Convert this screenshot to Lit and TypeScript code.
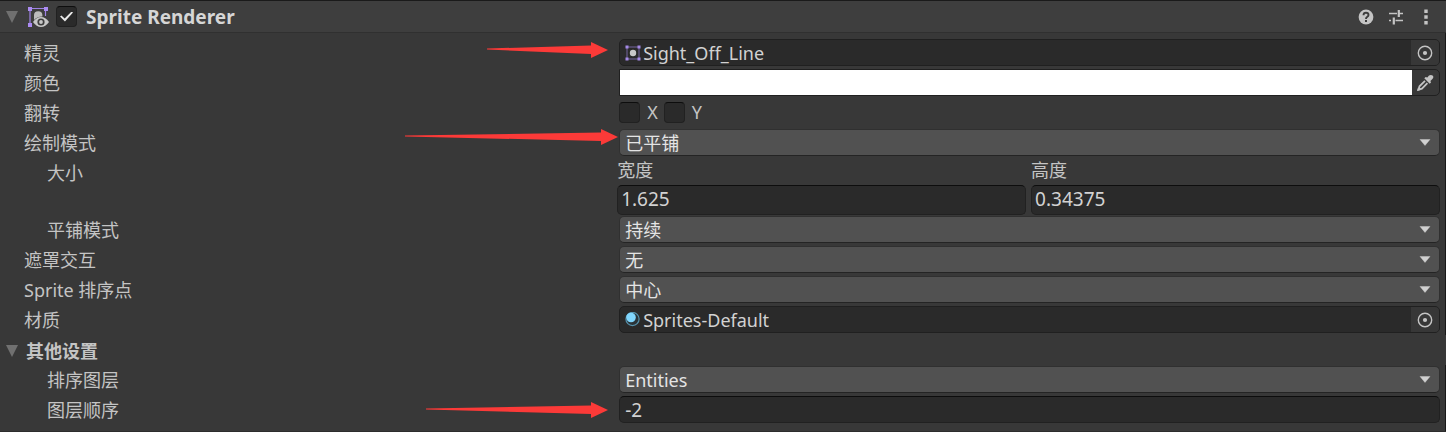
import { LitElement, html, css, svg, nothing } from "lit";
import { customElement, property } from "lit/decorators.js";

const sheet = css`
  * { box-sizing: border-box; }
  :host {
    font-family: "Noto Sans", "Noto Sans CJK SC", sans-serif;
    font-size: 18px;
    line-height: 26px;
    color: #c4c4c4;
  }
  button, input, select { font: inherit; margin: 0; color: inherit; }
  button { background: none; border: 0; padding: 0; }
  svg { display: block; }
`;

const triangle = svg`<svg width="12" height="12" viewBox="0 0 12 12"><path d="M0 0H12L6 12Z" fill="#707070"/></svg>`;

const rendererIcon = svg`<svg width="22" height="22" viewBox="0 0 22 22">
  <path d="M3 18V2.500H18.500V10" fill="none" stroke="#9f83e4" stroke-width="1.200"/>
  <path d="M1 1h4v4h-4zM17 1h4v4h-4zM1 17h4v4h-4z" fill="#ab8bf2"/>
  <path d="M7 12V9a4.200 3.800 0 0 1 8.400 0v1.500Q10 10.500 7 14Z" fill="#bdbdbd"/>
  <path d="M6 16Q9.500 11 14 11T22 16Q18.500 21 14 21T6 16Z" fill="#c8c8c8"/>
  <circle cx="14" cy="16" r="3.600" fill="#3e3e3e"/>
  <circle cx="14" cy="16" r="1.900" fill="#c8c8c8"/>
</svg>`;

const spriteIcon = svg`<svg width="16" height="16" viewBox="0 0 16 16">
  <path d="M2 2H14V14H2Z" fill="none" stroke="#75649f" stroke-width="1"/>
  <path d="M.5.5h3v3h-3zM12.500.5h3v3h-3zM.5 12.500h3v3h-3zM12.500 12.500h3v3h-3z" fill="#a58ae6"/>
  <circle cx="8" cy="8" r="3.200" fill="#c8c8c8"/>
</svg>`;

const materialIcon = svg`<svg width="16" height="16" viewBox="0 0 16 16">
  <circle cx="7.500" cy="7" r="6.600" fill="#2a3338" stroke="#5591ab" stroke-width="1.200"/>
  <circle cx="6" cy="5.500" r="4.800" fill="#80d6fd"/>
</svg>`;

const pickerIcon = svg`<svg width="16" height="16" viewBox="0 0 16 16">
  <circle cx="8" cy="8" r="6.700" fill="none" stroke="#c4c4c4" stroke-width="1.400"/>
  <circle cx="8" cy="8" r="2.100" fill="#c4c4c4"/>
</svg>`;

const dropperIcon = svg`<svg width="18" height="18" viewBox="0 0 18 18">
  <path d="M8.300 4.300 9.700 3 11.300 3.600 13 1.600Q15 .2 16.600 1.600T16.400 5L14.400 6.900 15 8.500 13.700 9.700Z" fill="#c4c4c4"/>
  <path d="M9 6.800 3.500 12.300 2.500 15.700 5.900 14.700 11.400 9.200" fill="none" stroke="#c4c4c4" stroke-width="1.800"/>
  <path d="M1 17 2 13.500 4.500 16Z" fill="#c4c4c4"/>
</svg>`;

const helpIcon = svg`<svg width="16" height="16" viewBox="0 0 16 16">
  <circle cx="8" cy="8" r="7.400" fill="#c4c4c4"/>
  <path d="M5.500 6.200Q5.500 3.800 8 3.800T10.500 6Q10.500 7.200 9.200 7.900 8 8.500 8 9.900" fill="none" stroke="#3c3c3c" stroke-width="1.900"/>
  <path d="M7 11h2v2h-2z" fill="#3c3c3c"/>
</svg>`;

const presetIcon = svg`<svg width="16" height="16" viewBox="0 0 16 16">
  <path d="M1 4.500h8M11 4.500h4M1 11.500h2M7.500 11.500h7.500" stroke="#c4c4c4" stroke-width="1.400"/>
  <path d="M9.700 1h2.200v7h-2.200zM4.700 8.500h2.200v7h-2.200z" fill="#c4c4c4"/>
</svg>`;

const menuIcon = svg`<svg width="6" height="16" viewBox="0 0 6 16">
  <path d="M1.300.5h3.400v3.400h-3.400zM1.300 6.300h3.400v3.400h-3.400zM1.300 12.100h3.400v3.400h-3.400z" fill="#c4c4c4"/>
</svg>`;

@customElement("pointer-arrow")
class PointerArrow extends LitElement {
  @property({ type: Number }) length = 120;
  static styles = css`svg { display: block; }`;
  render() {
    const n = this.length;
    return html`<svg width=${n} height="18" viewBox="0 0 ${n} 18" aria-hidden="true">
      <path fill="#fc3a38" d="M0 7.500 ${n - 17} 4.500V1L${n} 9 ${n - 17} 17V13L0 8.500Z"/>
    </svg>`;
  }
}

@customElement("inspector-row")
class InspectorRow extends LitElement {
  @property() label = "";
  @property({ type: Boolean, reflect: true }) nested = false;
  @property({ type: Boolean, reflect: true }) tall = false;
  @property({ type: Number }) arrow = 0;
  @property({ type: Boolean, reflect: true }) touching = false;
  static styles = [sheet, css`
    :host {
      display: grid;
      grid-template-columns: minmax(0, 3fr) minmax(0, 4fr);
      min-height: 30px;
    }
    .name { padding: 2px 0 2px 24px; white-space: nowrap; }
    :host([nested]) .name { padding-left: 47px; }
    .control { position: relative; padding: 1px 0 2px 2px; }
    :host([tall]) .control { padding: 0; }
    .arrow { position: absolute; right: 100%; top: 3px; margin-right: 9px; }
    :host([touching]) .arrow { top: 0; margin-right: -1px; }
    :host([nested]) .arrow { top: 6px; }
  `];
  render() {
    return html`
      <div class="name">${this.label}</div>
      <div class="control">
        <slot></slot>
        ${this.arrow ? html`<pointer-arrow class="arrow" .length=${this.arrow}></pointer-arrow>` : nothing}
      </div>`;
  }
}

@customElement("select-field")
class SelectField extends LitElement {
  @property() value = "";
  @property() label = "";
  static styles = [sheet, css`
    :host { display: block; }
    .field { display: grid; align-items: center; }
    .field > * { grid-area: 1 / 1; }
    .select {
      appearance: none;
      width: 100%;
      height: 27px;
      line-height: 24px;
      padding: 0 28px 0 5px;
      border: 1px solid #303030;
      border-bottom-color: #242424;
      border-radius: 5px;
      background: #515151;
      color: #e4e4e4;
    }
    .chevron { justify-self: end; margin-right: 9px; pointer-events: none; }
  `];
  render() {
    return html`<div class="field">
      <select class="select" aria-label=${this.label}><option selected>${this.value}</option></select>
      <svg class="chevron" width="12" height="7" viewBox="0 0 12 7"><path d="M1 .5H11L6 6.500Z" fill="#d0d0d0" stroke="#d0d0d0" stroke-width=".4"/></svg>
    </div>`;
  }
}

@customElement("text-field")
class TextField extends LitElement {
  @property() value = "";
  @property() label = "";
  @property() caption = "";
  static styles = [sheet, css`
    :host { display: block; }
    .caption { display: block; line-height: 24px; }
    .input {
      display: block;
      width: 100%;
      height: 27px;
      line-height: 24px;
      padding: 0 5px;
      border: 1px solid #212121;
      border-top-color: #0d0d0d;
      border-radius: 5px;
      background: #2a2a2a;
      color: #d2d2d2;
      font-size: 19px;
    }
    .caption .input { height: 30px; margin-top: 3px; padding: 0 3px 3px; }
  `];
  render() {
    return this.caption
      ? html`<label class="caption">${this.caption}<input class="input" type="text" .value=${this.value}></label>`
      : html`<input class="input" type="text" aria-label=${this.label} .value=${this.value}>`;
  }
}

@customElement("object-field")
class ObjectField extends LitElement {
  @property() value = "";
  @property() label = "";
  @property() kind = "sprite";
  static styles = [sheet, css`
    :host { display: block; }
    .box {
      display: flex;
      align-items: center;
      height: 27px;
      padding-left: 5px;
      border: 1px solid #202020;
      border-radius: 5px;
      background: #2a2a2a;
      overflow: hidden;
    }
    .input {
      flex: 1;
      min-width: 0;
      height: 25px;
      padding: 0 0 0 2px;
      border: 0;
      background: none;
      color: #d2d2d2;
    }
    .pick { display: grid; place-items: center; width: 28px; height: 25px; background: #373737; }
  `];
  render() {
    return html`<div class="box">
      ${this.kind === "sprite" ? spriteIcon : materialIcon}
      <input class="input" type="text" readonly aria-label=${this.label} .value=${this.value}>
      <button class="pick" aria-label="选择${this.label}">${pickerIcon}</button>
    </div>`;
  }
}

@customElement("app-root")
class AppRoot extends LitElement {
  static styles = [sheet, css`
    :host { display: block; min-height: 100vh; background: #383838; border-top: 1px solid #1a1a1a; }
    .header {
      display: flex;
      align-items: center;
      height: 32px;
      padding: 0 17px 0 6px;
      background: #3e3e3e;
      border-bottom: 1px solid #303030;
    }
    .fold { display: flex; }
    .kind { margin-left: 9px; }
    .enable { margin: 0 9px 0 7px; }
    .title { flex: 1; margin: 0; font-size: 19px; font-weight: 700; color: #d6d6d6; }
    .tools { display: flex; align-items: center; gap: 14px; }
    .tool { display: flex; }
    .tool:last-child { margin-left: 5px; }
    .check {
      appearance: none;
      display: grid;
      place-items: center;
      width: 21px;
      height: 21px;
      border: 1px solid #212121;
      border-top-color: #0d0d0d;
      border-radius: 4px;
      background: #2a2a2a;
    }
    .check:checked::after {
      content: "";
      width: 13px;
      height: 10px;
      background: #e8e8e8;
      clip-path: polygon(0 50%, 11% 39%, 36% 69%, 89% 0, 100% 10%, 38% 100%);
    }
    .group { padding: 5px 5px 0 0; border-right: 1px solid #191919; }
    .more { padding-top: 0; padding-bottom: 6px; }
    .color {
      display: flex;
      align-items: center;
      height: 27px;
      border: 1px solid #202020;
      border-radius: 0 5px 5px 0;
    }
    .swatch {
      appearance: none;
      flex: 1;
      min-width: 0;
      height: 25px;
      padding: 0;
      border: 0;
      background: #fff;
    }
    .swatch::-webkit-color-swatch-wrapper { padding: 0; }
    .swatch::-webkit-color-swatch { border: 0; border-radius: 0; }
    .dropper { display: grid; place-items: center; width: 27px; height: 25px; }
    .flips { display: flex; gap: 6px; }
    .flip { display: flex; align-items: center; gap: 7px; }
    .pair { display: grid; grid-template-columns: 1fr 1fr; gap: 5px; min-height: 57px; }
    .section {
      display: flex;
      align-items: center;
      gap: 8px;
      height: 30px;
      padding: 2px 0 0 6px;
      font-weight: 700;
    }
    .heading { margin: 0; font-size: 18px; }
    .end { border-top: 1px solid #2c2c2c; }
  `];
  render() {
    return html`
      <header class="header">
        <button class="fold" aria-label="折叠组件">${triangle}</button>
        <span class="kind">${rendererIcon}</span>
        <input class="check enable" type="checkbox" checked aria-label="Sprite Renderer">
        <h1 class="title">Sprite Renderer</h1>
        <div class="tools">
          <button class="tool" aria-label="帮助">${helpIcon}</button>
          <button class="tool" aria-label="预设">${presetIcon}</button>
          <button class="tool" aria-label="菜单">${menuIcon}</button>
        </div>
      </header>
      <section class="group">
        <inspector-row label="精灵" .arrow=${121}>
          <object-field label="精灵" value="Sight_Off_Line"></object-field>
        </inspector-row>
        <inspector-row label="颜色">
          <div class="color">
            <input class="swatch" type="color" value="#ffffff" aria-label="颜色">
            <button class="dropper" aria-label="吸管">${dropperIcon}</button>
          </div>
        </inspector-row>
        <inspector-row label="翻转">
          <div class="flips">
            <label class="flip"><input class="check" type="checkbox">X</label>
            <label class="flip"><input class="check" type="checkbox">Y</label>
          </div>
        </inspector-row>
        <inspector-row label="绘制模式" touching .arrow=${213}>
          <select-field label="绘制模式" value="已平铺"></select-field>
        </inspector-row>
        <inspector-row label="大小" nested tall>
          <div class="pair">
            <text-field caption="宽度" value="1.625"></text-field>
            <text-field caption="高度" value="0.34375"></text-field>
          </div>
        </inspector-row>
        <inspector-row label="平铺模式" nested>
          <select-field label="平铺模式" value="持续"></select-field>
        </inspector-row>
        <inspector-row label="遮罩交互">
          <select-field label="遮罩交互" value="无"></select-field>
        </inspector-row>
        <inspector-row label="Sprite 排序点">
          <select-field label="Sprite 排序点" value="中心"></select-field>
        </inspector-row>
        <inspector-row label="材质">
          <object-field label="材质" kind="material" value="Sprites-Default"></object-field>
        </inspector-row>
      </section>
      <div class="section">
        <button class="fold" aria-label="折叠其他设置">${triangle}</button>
        <h2 class="heading">其他设置</h2>
      </div>
      <section class="group more">
        <inspector-row label="排序图层" nested>
          <select-field label="排序图层" value="Entities"></select-field>
        </inspector-row>
        <inspector-row label="图层顺序" nested .arrow=${182}>
          <text-field label="图层顺序" value="-2"></text-field>
        </inspector-row>
      </section>
      <div class="end"></div>`;
  }
}
